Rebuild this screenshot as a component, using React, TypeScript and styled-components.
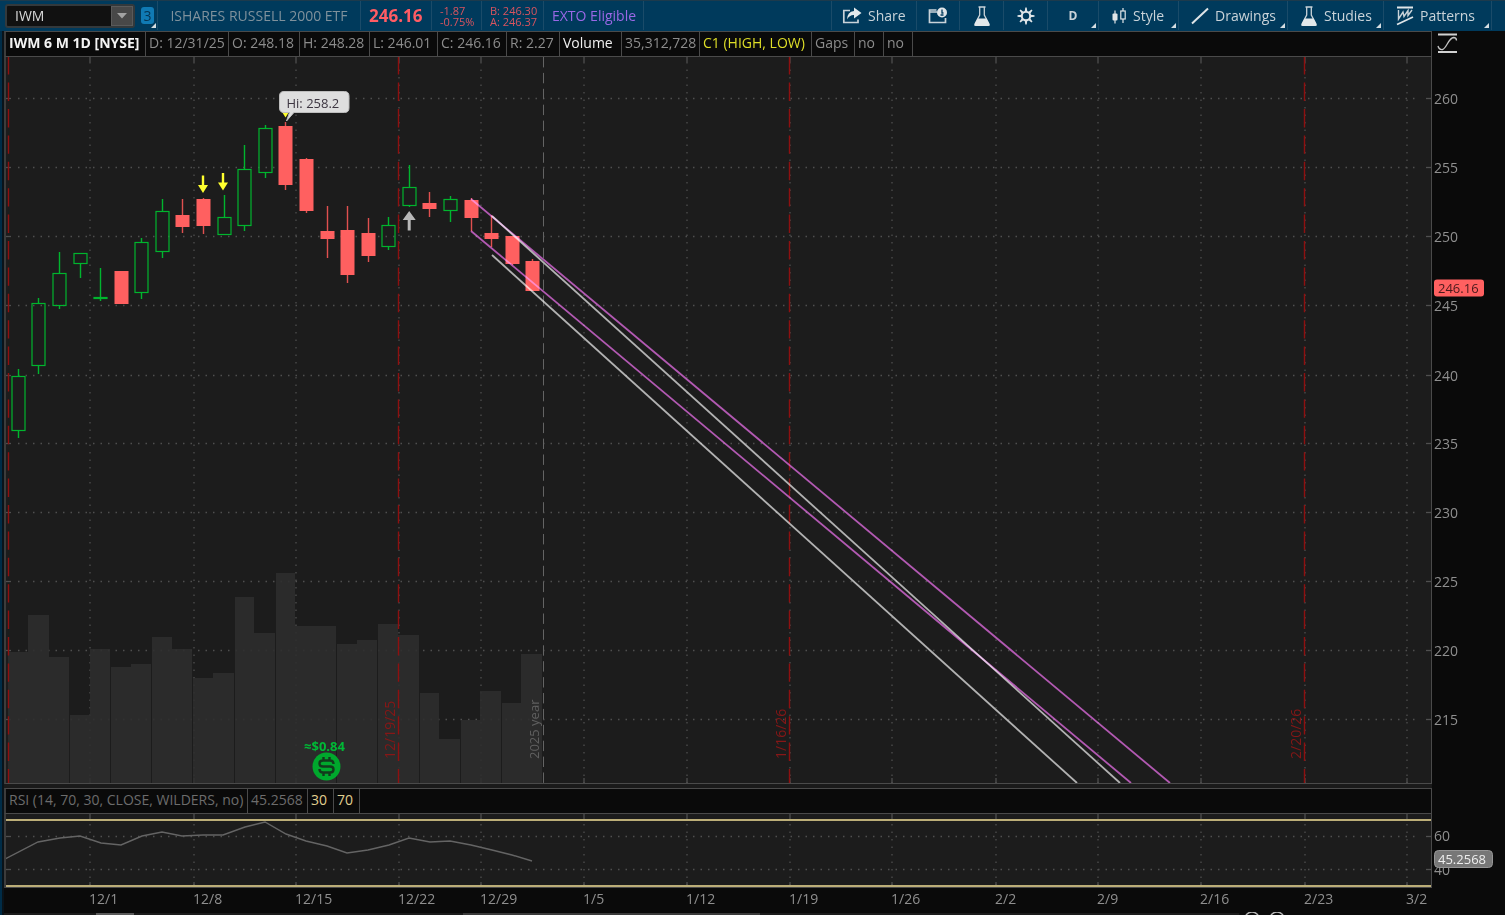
import React, { useLayoutEffect, useRef, useState } from "react";
import styled, { createGlobalStyle } from "styled-components";

const GlobalStyle = createGlobalStyle`
  * { box-sizing: border-box; }
  body {
    margin: 0;
    background: #0a0a0a;
    font-family: "Open Sans", "Noto Sans", sans-serif;
    font-size: 14px;
    color: #8c8c8c;
  }
  button, input { font: inherit; color: inherit; }
`;

const Page = styled.div`
  display: flex;
  flex-direction: column;
  height: 100vh;
  min-height: 480px;
  min-width: 1100px;
  overflow: hidden;
`;

/* ---------- toolbar ---------- */

const Toolbar = styled.header`
  display: flex;
  flex: none;
  height: 31px;
  padding-bottom: 1px;
  border-top: 1px solid #1d3a4c;
  background: #003a5c;
`;

const Cell = styled.div<{ $w: number }>`
  display: flex;
  align-items: center;
  flex: none;
  width: ${(p) => p.$w}px;
  padding-left: 8px;
  border-right: 1px solid #1a4b69;
  white-space: nowrap;
`;

const SymbolCell = styled(Cell)`
  gap: 6px;
  padding-left: 5px;
`;

const SymbolBox = styled.form`
  display: flex;
  width: 130px;
  height: 24px;
  border: 2px solid #33393c;
  border-radius: 3px;
  background: #111;
`;

const SymbolInput = styled.input`
  flex: 1;
  min-width: 0;
  padding: 0 8px;
  border: 0;
  background: transparent;
  color: #d8d8d8;
  outline: none;
`;

const DropButton = styled.button`
  width: 22px;
  padding: 0;
  border: 1px solid #5a5a5a;
  background: #484848;
  line-height: 0;
`;

const LinkBadge = styled.button`
  position: relative;
  width: 13px;
  height: 17px;
  padding: 0;
  border: 0;
  border-radius: 3px;
  background: #107ab4;
  color: #053453;
  line-height: 17px;
`;

const Corner = styled.span`
  position: absolute;
  right: 2px;
  bottom: 2px;
  border-left: 5px solid transparent;
  border-bottom: 5px solid #d5dde2;
`;

const BadgeCorner = styled(Corner)`
  right: -2px;
  bottom: -4px;
`;

const FundName = styled(Cell)`
  justify-content: center;
  padding: 0;
  color: #7f919c;
`;

const LastPrice = styled(Cell)`
  color: #ff5c64;
  font-size: 17px;
  font-weight: 700;
`;

const Pair = styled(Cell)`
  flex-direction: column;
  align-items: flex-start;
  justify-content: center;
  color: #d9545f;
  font-size: 11px;
  line-height: 11px;
`;

const Session = styled(Cell)`
  color: #9a68e6;
`;

const Spacer = styled.div`
  flex: 1;
  border-right: 1px solid #1a4b69;
`;

const ToolButton = styled.button<{ $w: number; $center?: boolean; $pad?: number }>`
  position: relative;
  display: flex;
  align-items: center;
  justify-content: ${(p) => (p.$center ? "center" : "flex-start")};
  gap: 6px;
  flex: none;
  width: ${(p) => p.$w}px;
  padding: 0 0 0 ${(p) => (p.$center ? 0 : p.$pad ?? 12)}px;
  border: 0;
  border-right: 1px solid #1a4b69;
  background: transparent;
  color: #c9d3d9;
  white-space: nowrap;
  svg { flex: none; }
`;

const Letter = styled.b`
  font-size: 12px;
`;

const ToolbarEnd = styled.div`
  flex: none;
  width: 13px;
`;

/* ---------- chart panels ---------- */

const Body = styled.main`
  display: flex;
  flex: 1;
  flex-direction: column;
  min-height: 0;
  padding-left: 4px;
  background: linear-gradient(to right, #002c47 2px, #0a1319 2px, #0a1319 4px, #0a0a0a 4px);
`;

const Panel = styled.section<{ $grow?: boolean }>`
  display: grid;
  grid-template-columns: minmax(0, 1fr) 73px;
  flex: ${(p) => (p.$grow ? "1 1 0" : "none")};
  grid-template-rows: 26px ${(p) => (p.$grow ? "minmax(0, 1fr)" : "74px")};
  min-height: 0;
`;

const InfoRow = styled.div`
  display: flex;
  border: 1px solid #4a4a4a;
  border-left: 2px solid #3c3c3c;
  background: #0a0a0a;
`;

const Info = styled.span<{ $w: number; $color?: string; $bold?: boolean }>`
  flex: none;
  width: ${(p) => p.$w}px;
  padding-left: 3px;
  border-right: 1px solid #4a4a4a;
  color: ${(p) => p.$color ?? "#8c8c8c"};
  font-weight: ${(p) => (p.$bold ? 700 : 400)};
  line-height: 22px;
  white-space: nowrap;
`;

const PlotFrame = styled.div`
  display: flex;
  min-width: 0;
  min-height: 0;
  border: 0 solid #4a4a4a;
  border-width: 0 1px 1px 2px;
  border-left-color: #3c3c3c;
  background: #1c1c1c;
`;

const AxisFrame = styled.div`
  display: flex;
  min-height: 0;
`;

const Measured = styled.div`
  flex: 1;
  min-width: 0;
  min-height: 0;
  overflow: hidden;
  svg { display: block; width: 100%; height: 100%; }
`;

const ScaleButton = styled.button`
  display: flex;
  align-items: flex-start;
  padding: 2px 5px;
  border: 0;
  background: transparent;
`;

const Divider = styled.div`
  flex: none;
  height: 4px;
  margin-right: 73px;
  background: #1a1a1a;
`;

const DateAxis = styled.div`
  display: flex;
  flex: none;
  height: 24px;
  margin-right: 73px;
  padding-left: 2px;
`;

const ScrollStrip = styled.div`
  flex: none;
  height: 3px;
  svg { display: block; width: 100%; height: 3px; }
`;

const Label = styled.text`
  fill: #8f8f8f;
  font-size: 14px;
`;

type Scale = { x: (v: number) => number; y: (v: number) => number; w: number; h: number };
type Domain = { x0: number; x1: number; y0: number; y1: number };

/* An svg that fills its box and hands its children a scale from chart units to pixels. */
function Canvas({ domain, children, label }: { domain: Domain; label: string; children: (s: Scale) => React.ReactNode }) {
  const ref = useRef<HTMLDivElement>(null);
  const [size, setSize] = useState({ w: domain.x1 - domain.x0, h: domain.y1 - domain.y0 });
  useLayoutEffect(() => {
    const el = ref.current;
    if (!el) return;
    const read = () => setSize({ w: el.clientWidth, h: el.clientHeight });
    read();
    const ro = new ResizeObserver(read);
    ro.observe(el);
    return () => ro.disconnect();
  }, []);
  const s: Scale = {
    ...size,
    x: (v) => ((v - domain.x0) * size.w) / (domain.x1 - domain.x0),
    y: (v) => ((v - domain.y0) * size.h) / (domain.y1 - domain.y0),
  };
  return (
    <Measured ref={ref}>
      <svg role="img" aria-label={label}>{children(s)}</svg>
    </Measured>
  );
}

const PRICE: Domain = { x0: 6, x1: 1431, y0: 57, y1: 783 };
const RSI: Domain = { x0: 6, x1: 1431, y0: 814, y1: 887 };
const DATES: Domain = { x0: 6, x1: 1432, y0: 888, y1: 912 };
const PRICE_AXIS: Domain = { x0: 1432, x1: 1505, y0: 57, y1: 784 };
const RSI_AXIS: Domain = { x0: 1432, x1: 1505, y0: 814, y1: 888 };

const weeks: [number, string][] = [
  [90, "12/1"], [194, "12/8"], [296, "12/15"], [399, "12/22"], [481, "12/29"], [584, "1/5"], [687, "1/12"],
  [790, "1/19"], [892, "1/26"], [996, "2/2"], [1098, "2/9"], [1201, "2/16"], [1305, "2/23"], [1407, "3/2"],
];

const prices: [number, number][] = [
  [260, 98], [255, 167], [250, 236], [245, 305], [240, 375], [235, 443], [230, 512], [225, 581], [220, 650], [215, 719],
];

/* rising?, body top, body bottom, high, low */
const candles: [boolean, number, number, number, number][] = [
  [true, 376, 430, 369, 438], [true, 303, 365, 298, 374], [true, 273, 305, 252, 309], [true, 253, 263, 253, 278],
  [true, 297, 298, 268, 301], [false, 271, 304, 271, 304], [true, 242, 292, 238, 299], [true, 211, 251, 199, 258],
  [false, 215, 227, 199, 233], [false, 199, 226, 198, 234], [true, 217, 234, 195, 235], [true, 169, 225, 145, 231],
  [true, 128, 172, 125, 178], [false, 126, 185, 122, 190], [false, 159, 211, 158, 213], [false, 231, 239, 206, 258],
  [false, 230, 275, 206, 283], [false, 233, 256, 218, 262], [true, 225, 246, 217, 250], [true, 187, 205, 165, 207],
  [false, 203, 209, 192, 217], [true, 199, 210, 196, 222], [false, 200, 218, 198, 231], [false, 233, 239, 215, 247],
  [false, 236, 264, 236, 265], [false, 261, 291, 259, 291],
];

const volumes = [
  652, 615, 657, 715, 649, 667, 664, 637, 649, 678, 673, 597, 633, 573, 626, 626, 644, 640, 624, 635, 693, 739, 720,
  691, 703, 654,
];
const seams = [3, 5, 7, 9, 11, 13, 16, 18, 20, 22, 24];

const expirations: [number, string][] = [[8, ""], [398, "12/19/25"], [789, "1/16/26"], [1304, "2/20/26"]];

const trends: [string, number, number, number, number][] = [
  ["#a944a9", 471, 199, 1170, 783],
  ["#a944a9", 471, 231, 1131, 783],
  ["#a8a8a8", 492, 216, 1120, 783],
  ["#a8a8a8", 492, 255, 1077, 783],
];

const rsi = [
  [5, 859], [38, 842], [60, 838], [80, 836], [101, 843], [121, 845], [142, 836], [162, 832], [182, 836], [203, 835],
  [223, 835], [245, 827], [265, 822], [286, 834], [306, 841], [327, 846], [347, 853], [368, 850], [389, 845],
  [409, 838], [430, 842], [450, 841], [471, 845], [492, 850], [512, 855], [532, 861],
];

function Grid({ s, levels, top, bottom }: { s: Scale; levels: number[]; top: number; bottom: number }) {
  return (
    <g stroke="#4f4f4f" strokeWidth={1.3}>
      {weeks.map(([x]) => {
        const px = Math.round(s.x(x));
        return (
          <g key={x}>
            <line x1={px} x2={px} y1={top} y2={s.h} strokeDasharray="1.5 6" />
            <line x1={px} x2={px} y1={0} y2={bottom} />
            <line x1={px} x2={px} y1={s.h - 5} y2={s.h} />
          </g>
        );
      })}
      {levels.map((v) => {
        const py = Math.round(s.y(v)) + 0.5;
        return (
          <g key={v}>
            <line x1={12} x2={s.w - 14} y1={py} y2={py} strokeDasharray="1.5 6" />
            <line x1={0} x2={5} y1={py} y2={py} />
            <line x1={s.w - 5} x2={s.w} y1={py} y2={py} />
          </g>
        );
      })}
    </g>
  );
}

function Candles({ s }: { s: Scale }) {
  return (
    <g>
      {candles.map(([up, top, bottom, high, low], i) => {
        const cx = Math.floor(s.x(18.3 + i * 20.58));
        const t = Math.round(s.y(top));
        const b = Math.round(s.y(bottom));
        const color = up ? "#00b52e" : "#e0504f";
        return (
          <g key={i}>
            <path d={`M${cx + 0.5} ${s.y(high)}V${t}M${cx + 0.5} ${b}V${s.y(low)}`} stroke={color} strokeWidth={1.4} />
            <rect
              x={cx - 6 + (up ? 0 : -0.5)}
              y={up ? t + 0.5 : t}
              width={up ? 13 : 14}
              height={Math.max(b - t, 1)}
              fill={up ? "none" : "#ff6060"}
              stroke={up ? color : "none"}
              strokeWidth={1.2}
            />
          </g>
        );
      })}
    </g>
  );
}

function DownArrow({ x, y }: { x: number; y: number }) {
  return <path transform={`translate(${x} ${y})`} d="M-1.2 0h2.400v9.500h3.800l-5 8l-5-8h3.800z" fill="#ffff2e" />;
}

function PricePlot() {
  return (
    <Canvas domain={PRICE} label="IWM daily candles with volume">
      {(s) => (
        <>
          <Grid s={s} levels={prices.map((p) => p[1])} top={5} bottom={5} />
          <g fill="#2d2d2d" fillOpacity={0.88}>
            {volumes.map((v, i) => {
              const left = Math.floor(s.x(8 + i * 20.55)) + (seams.includes(i) ? 1 : 0);
              const right = Math.floor(s.x(8 + (i + 1) * 20.55));
              return <rect key={i} x={left} y={s.y(v)} width={right - left} height={s.h - s.y(v)} />;
            })}
          </g>
          {expirations.map(([x, label]) => (
            <g key={x}>
              <line
                x1={Math.round(s.x(x)) + 0.5} x2={Math.round(s.x(x)) + 0.5} y1={0} y2={s.h}
                stroke="#8e1010" strokeWidth={1.4} strokeDasharray="18.4 8" strokeDashoffset={0.8}
              />
              <text transform={`translate(${s.x(x) - 3} ${s.h - 24}) rotate(-90)`} fill="#861717" fontSize={14}>{label}</text>
            </g>
          ))}
          <line x1={Math.round(s.x(543)) + 0.5} x2={Math.round(s.x(543)) + 0.5} y1={0} y2={s.h} stroke="#646464" strokeDasharray="10.4 5.5" />
          <text transform={`translate(${s.x(539)} ${s.h - 24}) rotate(-90)`} fill="#5f5f5f" fontSize={13}>2025 year</text>
          <Candles s={s} />
          <DownArrow x={s.x(203)} y={s.y(175.5)} />
          <DownArrow x={s.x(223)} y={s.y(173)} />
          <DownArrow x={s.x(285.5)} y={s.y(100)} />
          <path transform={`translate(${s.x(409.2)} ${s.y(211)})`} d="M0 0l6.5 9h-5v10.500h-3v-10.500h-5z" fill="#b8b8b8" />
          <g strokeWidth={1.8}>
            {trends.map(([c, x1, y1, x2, y2]) => (
              <line key={x2} x1={s.x(x1)} y1={s.y(y1)} x2={s.x(x2)} y2={s.y(y2)} stroke={c} style={{ mixBlendMode: "screen" }} />
            ))}
          </g>
          <g transform={`translate(${s.x(279.5)} ${s.y(91.500)})`}>
            <path d="M4.500 0h60.500q4.500 0 4.500 4.500v12q0 4.500-4.500 4.500h-50.500l-7.500 8.500l3-8.500h-5.500q-4.500 0-4.500-4.500v-12q0-4.500 4.500-4.500z" fill="#dedede" stroke="#bdbdbd" />
            <text x={7} y={16} fill="#3c3540" fontSize={13}>Hi: 258.2</text>
          </g>
          <g transform={`translate(${s.x(326.5)} ${s.y(766.500)})`}>
            <text x={-2} y={-16} textAnchor="middle" fill="#00b836" fontSize={13} fontWeight={700}>≈$0.84</text>
            <circle r={14} fill="#00a82d" />
            <path d="M7-2.500q0-3.500-3.500-3.500h-7q-3.500 0-3.500 3t3.500 3h7q3.500 0 3.500 3t-3.500 3h-7q-3.500 0-3.500-3.500M-3-9.500v3.500M3-9.500v3.500M-3 6v3.500M3 6v3.500" fill="none" stroke="#123a1c" strokeWidth={2.400} />
          </g>
        </>
      )}
    </Canvas>
  );
}

function RsiPlot() {
  return (
    <Canvas domain={RSI} label="RSI">
      {(s) => (
        <>
          <Grid s={s} levels={[836, 869]} top={10} bottom={6} />
          <polyline points={rsi.map(([x, y]) => `${s.x(x)},${s.y(y)}`).join(" ")} fill="none" stroke="#646464" strokeWidth={1.4} />
          {[819, 885].map((y) => (
            <rect key={y} x={0} y={s.y(y)} width={s.w} height={2} fill="#bcae78" />
          ))}
        </>
      )}
    </Canvas>
  );
}

/* ---------- icons ---------- */

const ShareIcon = () => (
  <svg width="20" height="18" viewBox="0 0 20 18">
    <path d="M8 3.500H1.800V15.500H16V12.500" fill="none" stroke="#c9d3d9" strokeWidth="1.700" />
    <path d="M12 0.500l7.500 5.500l-7.500 5.500v-3.500q-4.500-.2-7 4.500q.3-7.700 7-8.500z" fill="#e2e8eb" />
  </svg>
);
const NewsIcon = () => (
  <svg width="20" height="18" viewBox="0 0 20 18">
    <path d="M9 5H1.500M17.500 11v4.500h-16v-12.500h7" fill="none" stroke="#c9d3d9" strokeWidth="1.700" />
    <circle cx="14" cy="5.500" r="5" fill="#dfe5e8" />
    <path d="M14 2.500v3.500h1.500M12.500 8h3" fill="none" stroke="#003a5c" strokeWidth="1.300" />
  </svg>
);
const FlaskIcon = () => (
  <svg width="18" height="20" viewBox="0 0 18 20">
    <path d="M5.500 1h7M6.700 1.500v7.500L2 18M11.300 1.500v7.500L16 18" fill="none" stroke="#c9d3d9" strokeWidth="1.300" />
    <path d="M4.500 12.500h9l3.500 6.500q-.5 1-1.500 1h-13q-1 0-1.500-1z" fill="#e2e8eb" />
  </svg>
);
const GearIcon = () => (
  <svg width="18" height="18" viewBox="-9 -9 18 18">
    <circle r="4.200" fill="none" stroke="#dfe5e8" strokeWidth="2" />
    {[0, 45, 90, 135, 180, 225, 270, 315].map((a) => (
      <path key={a} d="M-1.300-4.500L-.7-8.500H.7L1.300-4.500z" fill="#dfe5e8" transform={`rotate(${a})`} />
    ))}
  </svg>
);
const CandleIcon = () => (
  <svg width="16" height="18" viewBox="0 0 16 18">
    <path d="M4 3.500v13M12 1v3M12 12v4" stroke="#dfe5e8" strokeWidth="1.200" />
    <rect x="1.500" y="6.500" width="5" height="7" rx="1" fill="#dfe5e8" />
    <rect x="9.800" y="4" width="4.400" height="8" fill="none" stroke="#dfe5e8" strokeWidth="1.200" />
  </svg>
);
const LineIcon = () => (
  <svg width="18" height="18" viewBox="0 0 18 18">
    <path d="M1 16.500L17 1.500" stroke="#dfe5e8" strokeWidth="2" />
  </svg>
);
const PatternIcon = () => (
  <svg width="18" height="20" viewBox="0 0 18 20">
    <path d="M1 1.500h16M1 18.500l16-7.500" stroke="#dfe5e8" strokeWidth="1.800" />
    <path d="M2.500 4v9l4.500-7l1 4.500l4-6v5l4-5.500" fill="none" stroke="#c9d3d9" strokeWidth="1.400" />
  </svg>
);

export default function App() {
  return (
    <Page>
      <GlobalStyle />
      <Toolbar>
        <SymbolCell $w={158}>
          <SymbolBox onSubmit={(e) => e.preventDefault()}>
            <SymbolInput aria-label="Symbol" defaultValue="IWM" />
            <DropButton type="button" aria-label="Recent symbols">
              <svg width="10" height="6"><path d="M0 0h10l-5 5.500z" fill="#a2a2a2" /></svg>
            </DropButton>
          </SymbolBox>
          <LinkBadge type="button">3<BadgeCorner /></LinkBadge>
        </SymbolCell>
        <FundName $w={203}>ISHARES RUSSELL 2000 ETF</FundName>
        <LastPrice $w={71}>246.16</LastPrice>
        <Pair $w={50}><span>-1.87</span><span>-0.75%</span></Pair>
        <Pair $w={62}><span>B: 246.30</span><span>A: 246.37</span></Pair>
        <Session $w={100}>EXTO Eligible</Session>
        <Spacer />
        <ToolButton $w={85} $pad={10}><ShareIcon />Share</ToolButton>
        <ToolButton $w={43} $center aria-label="News"><NewsIcon /></ToolButton>
        <ToolButton $w={44} $center aria-label="Lab"><FlaskIcon /></ToolButton>
        <ToolButton $w={44} $center aria-label="Settings"><GearIcon /></ToolButton>
        <ToolButton $w={51} $center><Letter>D</Letter><Corner /></ToolButton>
        <ToolButton $w={80}><CandleIcon />Style<Corner /></ToolButton>
        <ToolButton $w={109}><LineIcon />Drawings<Corner /></ToolButton>
        <ToolButton $w={96}><FlaskIcon />Studies<Corner /></ToolButton>
        <ToolButton $w={108}><PatternIcon />Patterns<Corner /></ToolButton>
        <ToolbarEnd />
      </Toolbar>

      <Body>
        <Panel $grow>
          <InfoRow>
            <Info $w={140} $color="#f4f4f4" $bold>IWM 6 M 1D [NYSE]</Info>
            <Info $w={83}>D: 12/31/25</Info>
            <Info $w={71}>O: 248.18</Info>
            <Info $w={70}>H: 248.28</Info>
            <Info $w={68}>L: 246.01</Info>
            <Info $w={69}>C: 246.16</Info>
            <Info $w={53}>R: 2.27</Info>
            <Info $w={62} $color="#f0f0f0">Volume</Info>
            <Info $w={78}>35,312,728</Info>
            <Info $w={112} $color="#dede28">C1 (HIGH, LOW)</Info>
            <Info $w={43}>Gaps</Info>
            <Info $w={29}>no</Info>
            <Info $w={29}>no</Info>
          </InfoRow>
          <ScaleButton aria-label="Chart scale">
            <svg width="21" height="21" viewBox="0 0 21 21">
              <path d="M1 1.500h19M1 19h19" stroke="#d2d2d2" strokeWidth="2" />
              <path d="M1 13q1 4 4.500 3.500c4-1 6-11.500 11-12q3 0 3 3" fill="none" stroke="#c4c4c4" strokeWidth="1.300" />
            </svg>
          </ScaleButton>
          <PlotFrame><PricePlot /></PlotFrame>
          <AxisFrame>
            <Canvas domain={PRICE_AXIS} label="Price axis">
              {(s) => (
                <>
                  {prices.map(([v, y]) => (
                    <Label key={v} x={2} y={Math.round(s.y(y)) + 6}>{v}</Label>
                  ))}
                  <rect x={2} y={s.y(279.5)} width={50} height={17} rx={3} fill="#ff6060" />
                  <text x={6} y={s.y(293)} fill="#4a1a1c" fontSize={13}>246.16</text>
                </>
              )}
            </Canvas>
          </AxisFrame>
        </Panel>

        <Divider />

        <Panel>
          <InfoRow>
            <Info $w={242} $color="#6c6c6c">RSI (14, 70, 30, CLOSE, WILDERS, no)</Info>
            <Info $w={60} $color="#6c6c6c">45.2568</Info>
            <Info $w={26} $color="#e0d090">30</Info>
            <Info $w={26} $color="#e0d090">70</Info>
          </InfoRow>
          <span />
          <PlotFrame><RsiPlot /></PlotFrame>
          <AxisFrame>
            <Canvas domain={RSI_AXIS} label="RSI axis">
              {(s) => (
                <>
                  <Label x={2} y={s.y(841)}>60</Label>
                  <Label x={2} y={s.y(875)}>40</Label>
                  <rect x={2.5} y={s.y(850.5)} width={58} height={17} rx={4} fill="#777" stroke="#969696" />
                  <text x={6} y={s.y(864)} fill="#eee" fontSize={13}>45.2568</text>
                </>
              )}
            </Canvas>
          </AxisFrame>
        </Panel>

        <DateAxis>
          <Canvas domain={DATES} label="Date axis">
            {(s) => weeks.map(([x, d]) => <Label key={d} x={Math.round(s.x(x)) - 1} y={s.y(904)}>{d}</Label>)}
          </Canvas>
        </DateAxis>
        <ScrollStrip>
          <svg aria-hidden="true">
            <rect width="82.300%" height="3" y="1" fill="#1b1b1b" />
            <rect x="92" y="1" width="38" height="2" fill="#5a5a5a" />
            <rect x="459" y="1" width="297" height="2" fill="#3a3a3a" />
            <circle cx="1248" cy="7" r="7" fill="none" stroke="#b5b5b5" strokeWidth="1.500" />
            <circle cx="1273" cy="7" r="7" fill="none" stroke="#b5b5b5" strokeWidth="1.500" />
          </svg>
        </ScrollStrip>
      </Body>
    </Page>
  );
}
